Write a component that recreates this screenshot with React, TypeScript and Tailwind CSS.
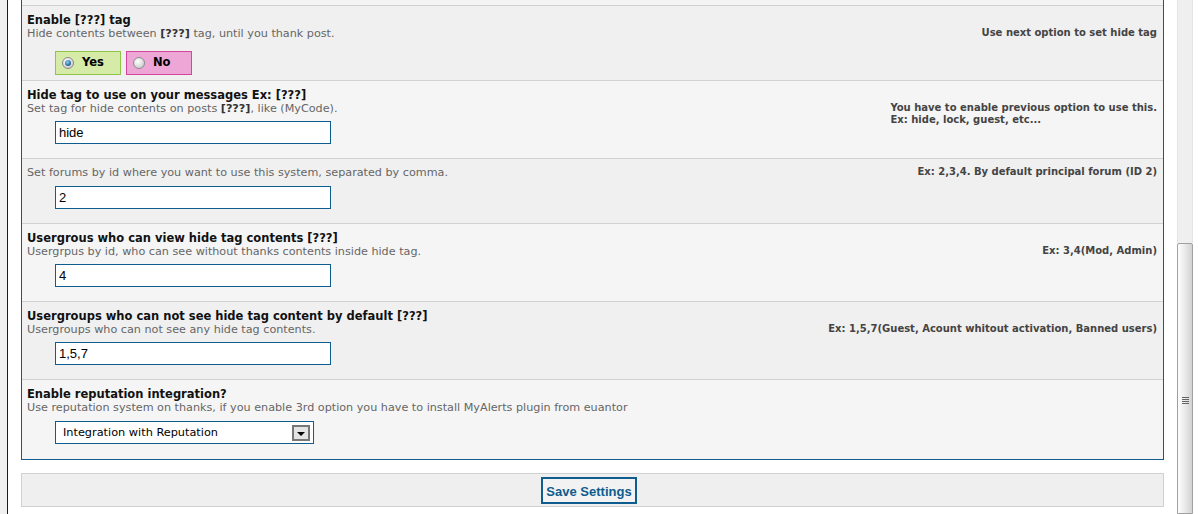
import React from "react";

function Radio({ checked, id }: { checked: boolean; id: string }) {
  return (
    <svg width="12" height="12" viewBox="0 0 12 12" className="shrink-0">
      <defs>
        <radialGradient id={`${id}-b`} cx="40%" cy="35%" r="70%">
          <stop offset="0" stopColor="#ffffff" />
          <stop offset="1" stopColor="#c9c9c9" />
        </radialGradient>
        <radialGradient id={`${id}-d`} cx="40%" cy="35%" r="65%">
          <stop offset="0" stopColor="#8fd0f5" />
          <stop offset="1" stopColor="#1b5a8c" />
        </radialGradient>
      </defs>
      <circle cx="6" cy="6" r="5.5" fill={`url(#${id}-b)`} stroke="#8a8a8a" />
      {checked && <circle cx="6" cy="6" r="3" fill={`url(#${id}-d)`} />}
    </svg>
  );
}

function TextInput({ value }: { value: string }) {
  return (
    <input
      readOnly
      defaultValue={value}
      className="ml-[28px] mt-[6px] block h-[23px] w-[276px] border border-[#0f5c8e] bg-white px-[3px] font-['Liberation_Sans',Arial,sans-serif] text-[13px] text-black outline-none"
    />
  );
}

function Title({ children }: { children: React.ReactNode }) {
  return <div className="text-[11.5px] font-bold leading-[14px] text-[#111]">{children}</div>;
}

function DescRow({ desc, note }: { desc: React.ReactNode; note?: React.ReactNode }) {
  return (
    <div className="flex h-[13px] items-start justify-between">
      <div className="text-[11.2px] leading-[13px] text-[#666]">{desc}</div>
      {note && <div className="text-[10px] font-bold leading-[12px] text-[#444]">{note}</div>}
    </div>
  );
}

const Q = () => <b className="text-[#333]">[???]</b>;

export default function App() {
  return (
    <div className="flex h-[514px] w-[1198px] overflow-hidden bg-white font-['DejaVu_Sans',Verdana,sans-serif]">
      <div className="w-[7px] shrink-0 bg-[#f0f0f0]" />
      <div className="w-px shrink-0 bg-[#1c1c1c]" />
      <div className="w-[13px] shrink-0" />

      <div className="flex w-[1143px] shrink-0 flex-col">
        <div className="border-x border-b border-[#0f5c8e]">
          <div className="h-[5px] bg-[#f4f4f4]" />

          {/* Row 1 */}
          <div className="border-t border-[#d1d1d1] bg-[#f0f0f0] pb-[5px] pl-[5px] pr-[6px] pt-[7px]">
            <Title>Enable [???] tag</Title>
            <DescRow
              desc={
                <>
                  Hide contents between <Q /> tag, until you thank post.
                </>
              }
              note="Use next option to set hide tag"
            />
            <div className="ml-[28px] mt-[11px] flex gap-[5px]">
              <div className="flex h-[24px] w-[66px] items-center border border-[#8fc54a] bg-[#d6eba8] pl-[6px]">
                <Radio checked id="r1" />
                <span className="ml-[8px] text-[11.5px] font-bold text-black">Yes</span>
              </div>
              <div className="flex h-[24px] w-[66px] items-center border border-[#d2469c] bg-[#eda6d6] pl-[6px]">
                <Radio checked={false} id="r2" />
                <span className="ml-[8px] text-[11.5px] font-bold text-black">No</span>
              </div>
            </div>
          </div>

          {/* Row 2 */}
          <div className="border-t border-[#d1d1d1] bg-[#f5f5f5] pb-[14px] pl-[5px] pr-[6px] pt-[7px]">
            <Title>Hide tag to use on your messages Ex: [???]</Title>
            <DescRow
              desc={
                <>
                  Set tag for hide contents on posts <Q />, like (MyCode).
                </>
              }
              note={
                <>
                  You have to enable previous option to use this.
                  <br />
                  Ex: hide, lock, guest, etc...
                </>
              }
            />
            <TextInput value="hide" />
          </div>

          {/* Row 3 */}
          <div className="border-t border-[#d1d1d1] bg-[#f0f0f0] pb-[14px] pl-[5px] pr-[6px] pt-[7px]">
            <DescRow
              desc="Set forums by id where you want to use this system, separated by comma."
              note="Ex: 2,3,4. By default principal forum (ID 2)"
            />
            <div className="pt-px">
              <TextInput value="2" />
            </div>
          </div>

          {/* Row 4 */}
          <div className="border-t border-[#d1d1d1] bg-[#f5f5f5] pb-[14px] pl-[5px] pr-[6px] pt-[7px]">
            <Title>Usergrous who can view hide tag contents [???]</Title>
            <DescRow
              desc="Usergrpus by id, who can see without thanks contents inside hide tag."
              note="Ex: 3,4(Mod, Admin)"
            />
            <TextInput value="4" />
          </div>

          {/* Row 5 */}
          <div className="border-t border-[#d1d1d1] bg-[#f0f0f0] pb-[14px] pl-[5px] pr-[6px] pt-[7px]">
            <Title>Usergroups who can not see hide tag content by default [???]</Title>
            <DescRow
              desc="Usergroups who can not see any hide tag contents."
              note="Ex: 1,5,7(Guest, Acount whitout activation, Banned users)"
            />
            <TextInput value="1,5,7" />
          </div>

          {/* Row 6 */}
          <div className="border-t border-[#d1d1d1] bg-[#f5f5f5] pb-[15px] pl-[5px] pr-[6px] pt-[7px]">
            <Title>Enable reputation integration?</Title>
            <DescRow desc="Use reputation system on thanks, if you enable 3rd option you have to install MyAlerts plugin from euantor" />
            <div className="ml-[28px] mt-[7px] flex h-[23px] w-[259px] items-center justify-between border border-[#0f5c8e] bg-white pl-[7px] pr-[3px]">
              <span className="pt-px text-[11.3px] text-black">Integration with Reputation</span>
              <div className="flex h-[16px] w-[18px] items-center justify-center border-2 border-[#777] bg-[#e3e3e3] pt-[3px]">
                <svg width="8" height="4" viewBox="0 0 8 4">
                  <polygon points="0,0 8,0 4,4" fill="#000" />
                </svg>
              </div>
            </div>
          </div>
        </div>

        <div className="mt-[13px] flex h-[34px] justify-center border border-[#d1d1d1] bg-[#efefef] pr-[7px] pt-[3px]">
          <button className="h-[27px] w-[96px] border-2 border-[#0f5c8e] bg-[#f2f2f2] pt-[2px] font-['Liberation_Sans',Arial,sans-serif] text-[13px] font-bold text-[#0f5c8e]">
            Save Settings
          </button>
        </div>
      </div>

      <div className="w-[13px] shrink-0" />

      {/* scrollbar */}
      <div className="flex w-[16px] shrink-0 flex-col">
        <div className="h-[243px] border-x border-[#e4e4e4] bg-[#efefef]" />
        <div className="flex flex-1 justify-center rounded-t-[2px] border border-[#a0a0a0] bg-[linear-gradient(to_right,#fdfdfd,#ececec_45%,#d2d2d2)] pt-[153px]">
          <div className="flex flex-col gap-px">
            <div className="h-px w-[7px] bg-[#666]" />
            <div className="h-px w-[7px] bg-[#666]" />
            <div className="h-px w-[7px] bg-[#666]" />
            <div className="h-px w-[7px] bg-[#666]" />
          </div>
        </div>
      </div>
    </div>
  );
}
